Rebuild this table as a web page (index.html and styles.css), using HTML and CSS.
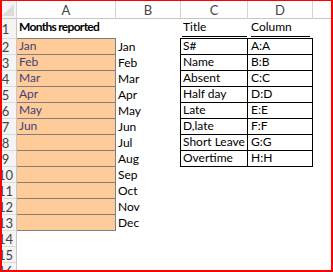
FILE: index.html
```html
<!DOCTYPE html>
<html>
<head>
<meta charset="utf-8">
<link rel="stylesheet" href="styles.css">
</head>
<body>
<div class="frame">
  <div class="sheet">
    <div class="corner"><svg width="12" height="12" viewBox="0 0 12 12"><polygon points="12,0 12,12 0,12" fill="#dcdcdc"/></svg></div>
    <div class="ch">A</div><div class="ch">B</div><div class="ch">C</div><div class="ch">D</div><div class="ch ce"></div>

    <div class="rh">1</div><div class="c bold">Months reported</div><div class="c"></div><div class="c hd"><span class="ul ul-c">Title</span></div><div class="c hd"><span class="ul ul-d">Column</span></div><div class="c"></div>

    <div class="rh">2</div><div class="c in">Jan</div><div class="c">Jan</div><div class="c tb tl">S#</div><div class="c tb tr">A:A</div><div class="c"></div>
    <div class="rh">3</div><div class="c in">Feb</div><div class="c">Feb</div><div class="c tb tl">Name</div><div class="c tb tr">B:B</div><div class="c"></div>
    <div class="rh">4</div><div class="c in">Mar</div><div class="c">Mar</div><div class="c tb tl">Absent</div><div class="c tb tr">C:C</div><div class="c"></div>
    <div class="rh">5</div><div class="c in">Apr</div><div class="c">Apr</div><div class="c tb tl">Half day</div><div class="c tb tr">D:D</div><div class="c"></div>
    <div class="rh">6</div><div class="c in">May</div><div class="c">May</div><div class="c tb tl">Late</div><div class="c tb tr">E:E</div><div class="c"></div>
    <div class="rh">7</div><div class="c in">Jun</div><div class="c">Jun</div><div class="c tb tl">D,late</div><div class="c tb tr">F:F</div><div class="c"></div>
    <div class="rh">8</div><div class="c in"></div><div class="c">Jul</div><div class="c tb tl">Short Leave</div><div class="c tb tr">G:G</div><div class="c"></div>
    <div class="rh">9</div><div class="c in"></div><div class="c">Aug</div><div class="c tb tl">Overtime</div><div class="c tb tr">H:H</div><div class="c"></div>
    <div class="rh">10</div><div class="c in"></div><div class="c">Sep</div><div class="c"></div><div class="c"></div><div class="c"></div>
    <div class="rh">11</div><div class="c in"></div><div class="c">Oct</div><div class="c"></div><div class="c"></div><div class="c"></div>
    <div class="rh">12</div><div class="c in"></div><div class="c">Nov</div><div class="c"></div><div class="c"></div><div class="c"></div>
    <div class="rh">13</div><div class="c in"></div><div class="c">Dec</div><div class="c"></div><div class="c"></div><div class="c"></div>
    <div class="rh">14</div><div class="c"></div><div class="c"></div><div class="c"></div><div class="c"></div><div class="c"></div>
    <div class="rh">15</div><div class="c"></div><div class="c"></div><div class="c"></div><div class="c"></div><div class="c"></div>
    <div class="rh">16</div><div class="c"></div><div class="c"></div><div class="c"></div><div class="c"></div><div class="c"></div>
  </div>
</div>
</body>
</html>
```

FILE: styles.css
```css
* { box-sizing: border-box; }
html, body { margin: 0; padding: 0; background: #fff; }
.frame {
  width: 333px;
  height: 272px;
  border-style: solid;
  border-color: #ff0000;
  border-width: 1px 2px 2px 2px;
  overflow: hidden;
  background: #fff;
}
.sheet {
  margin-left: -7px;
  display: grid;
  grid-template-columns: 22px 99px 65px 67px 65px 40px;
  grid-template-rows: 18px 20px repeat(15, 16px);
  font-family: "Lato", "Liberation Sans", sans-serif;
  font-size: 12px;
  color: #000;
}
.corner {
  background: #f4f4f4;
  border-right: 1px solid #d4d4d4;
  border-bottom: 1px solid #c6c6c6;
  display: flex;
  justify-content: flex-end;
  align-items: flex-end;
  padding: 0 2px 2px 0;
}
.corner svg { display: block; }
.ch {
  background: #fff;
  color: #444;
  border-right: 1px solid #d4d4d4;
  border-bottom: 1px solid #c6c6c6;
  display: flex;
  align-items: center;
  justify-content: center;
  font-size: 13px;
  padding-top: 1px;
}
.ch.ce { border-right: none; }
.rh {
  background: #f4f4f4;
  color: #444;
  border-right: 1px solid #c6c6c6;
  border-bottom: 1px solid #dadada;
  display: flex;
  align-items: center;
  justify-content: center;
  font-size: 13px;
}
.c {
  display: flex;
  align-items: flex-end;
  padding: 0 0 1px 2px;
  white-space: nowrap;
  line-height: 15px;
}
.bold { font-weight: bold; padding-bottom: 5px; letter-spacing: -0.7px; }
.in {
  background: #ffcc99;
  color: #3f3f76;
  border: 1px solid #7f7f7f;
  border-left: none;
  margin-top: -1px;
}
.tb {
  border-top: 1px solid #000;
  border-bottom: 1px solid #000;
  border-right: 1px solid #000;
  margin-top: -1px;
}
.tl { border-left: 1px solid #000; margin-left: -1px; padding-left: 2px; }
.tr { padding-left: 3px; }
.hd { padding: 0 0 2px 0; }
.ul {
  display: block;
  width: 100%;
  border-bottom: 1px solid #000;
  padding-bottom: 2px;
}
.ul-c { margin: 0 1px 0 1px; padding-left: 1px; }
.ul-d { margin: 0 3px 0 3px; padding-left: 0; }
```
